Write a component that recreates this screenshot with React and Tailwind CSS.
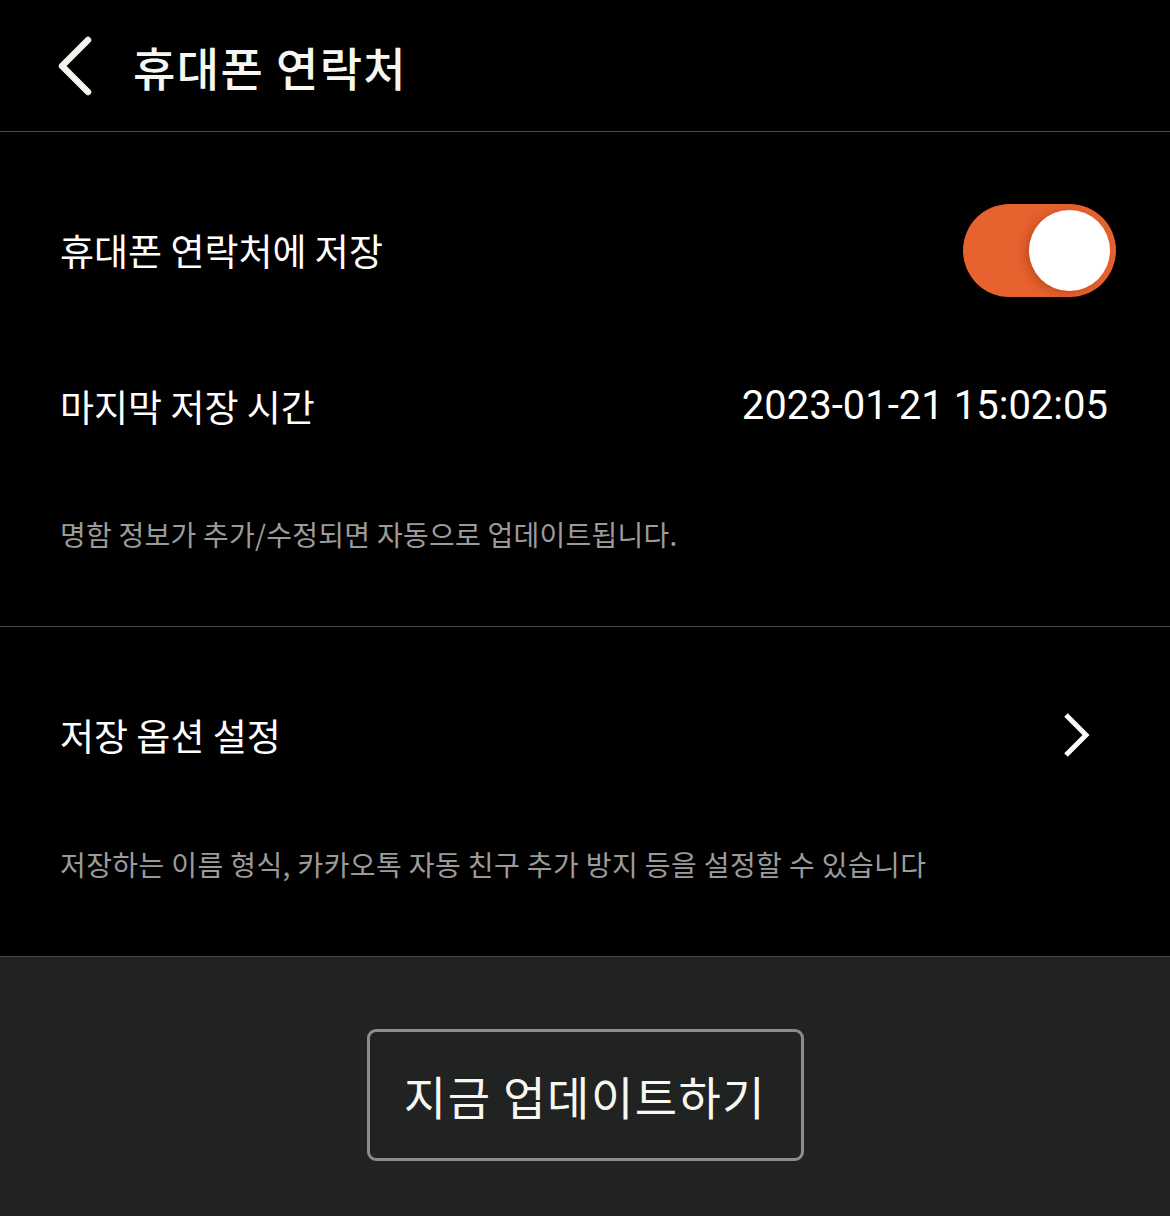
import React from 'react';

const kr = { fontFamily: '"Noto Sans CJK KR", "Noto Sans", sans-serif' };

const BackIcon = () => (
  <svg width="40" height="60" viewBox="0 0 40 60" fill="none" aria-hidden="true">
    <path d="M32 4 L6 30 L32 56" stroke="#f5f5f0" strokeWidth="6.5" strokeLinecap="round" strokeLinejoin="round" />
  </svg>
);

const ChevronRight = () => (
  <svg width="30" height="44" viewBox="0 0 30 44" fill="none" aria-hidden="true">
    <path d="M4 2 L24 22 L4 42" stroke="#ffffff" strokeWidth="5" strokeLinejoin="miter" />
  </svg>
);

const Toggle = () => (
  <div className="w-[153px] h-[93px] rounded-full bg-[#e8622f] flex items-center justify-end pr-[6px]">
    <div className="w-[81px] h-[81px] rounded-full bg-white shadow-[-4px_2px_10px_rgba(120,40,10,0.35)]" />
  </div>
);

export default function App() {
  return (
    <div className="w-[1170px] h-[1216px] bg-black text-white flex flex-col" style={kr}>
      <header className="h-[132px] border-b border-[#4a4a4a] flex items-center pl-[56px] shrink-0">
        <BackIcon />
        <h1 className="ml-[37px] text-[46px] font-medium tracking-[1.4px] leading-none text-[#f7f7f2]">
          휴대폰 연락처
        </h1>
      </header>

      <section className="border-b border-[#4a4a4a] pt-[40px] pb-[74px] pl-[60px] shrink-0">
        <div className="h-[156px] flex items-center justify-between pr-[54px]">
          <span className="text-[37px] leading-none">휴대폰 연락처에 저장</span>
          <Toggle />
        </div>
        <div className="h-[156px] flex items-center justify-between pr-[62px]">
          <span className="text-[37px] leading-none">마지막 저장 시간</span>
          <span className="text-[40px] leading-none" style={{ fontFamily: 'Roboto, "Noto Sans", sans-serif' }}>
            2023-01-21 15:02:05
          </span>
        </div>
        <p className="mt-[32px] text-[28px] leading-[36px] tracking-[0.25px] text-[#9b9b9b]">
          명함 정보가 추가/수정되면 자동으로 업데이트됩니다.
        </p>
      </section>

      <section className="border-b border-[#4a4a4a] pt-[30px] pb-[74px] pl-[60px] shrink-0">
        <div className="h-[156px] flex items-center justify-between pr-[78px]">
          <span className="text-[37px] leading-none">저장 옵션 설정</span>
          <ChevronRight />
        </div>
        <p className="mt-[33px] text-[28px] leading-[36px] tracking-[0.4px] text-[#9b9b9b]">
          저장하는 이름 형식, 카카오톡 자동 친구 추가 방지 등을 설정할 수 있습니다
        </p>
      </section>

      <div className="flex-1 bg-[#212222] flex justify-center pt-[72px]">
        <button className="w-[437px] h-[132px] rounded-[9px] border-[3px] border-[#8c8c89] text-[46px] tracking-[1.5px] leading-none text-[#f7f7f2]">
          지금 업데이트하기
        </button>
      </div>
    </div>
  );
}
